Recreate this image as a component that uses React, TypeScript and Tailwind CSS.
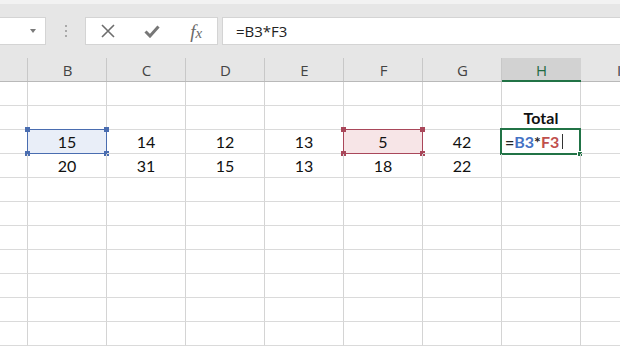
import React from "react";

const cols = ["A", "B", "C", "D", "E", "F", "G", "H", "I"];

const rows: string[][] = [
  ["", "", "", "", "", "", "", "", ""],
  ["", "", "", "", "", "", "", "Total", ""],
  ["", "15", "14", "12", "13", "5", "42", "", ""],
  ["", "20", "31", "15", "13", "18", "22", "", ""],
  ["", "", "", "", "", "", "", "", ""],
  ["", "", "", "", "", "", "", "", ""],
  ["", "", "", "", "", "", "", "", ""],
  ["", "", "", "", "", "", "", "", ""],
  ["", "", "", "", "", "", "", "", ""],
  ["", "", "", "", "", "", "", "", ""],
  ["", "", "", "", "", "", "", "", ""],
];

const cellFont = { fontFamily: "Lato, 'Liberation Sans', sans-serif" };
const uiFont = { fontFamily: "'Open Sans', 'Noto Sans', sans-serif" };

function Corners({ color }: { color: string }) {
  const base = "absolute w-[5px] h-[5px]";
  return (
    <>
      <span className={`${base} left-[-3px] top-[-3px] ${color}`} />
      <span className={`${base} right-[-3px] top-[-3px] ${color}`} />
      <span className={`${base} left-[-3px] bottom-[-3px] ${color}`} />
      <span className={`${base} right-[-3px] bottom-[-3px] ${color}`} />
    </>
  );
}

export default function App() {
  return (
    <div className="w-[620px] h-[346px] overflow-hidden bg-white relative">
      {/* top strip */}
      <div className="h-[4px] bg-[#f2f2f2]" />
      <div className="bg-[#e6e6e6] pt-[13px] pb-[13px]">
        <div className="flex items-stretch h-[28px]">
          {/* name box */}
          <div className="w-[46px] bg-white border border-l-0 border-[#d4d4d4] flex items-center justify-end pr-[9px]">
            <svg width="6" height="4" viewBox="0 0 6 4">
              <path d="M0 0 L6 0 L3 4 Z" fill="#7a7a7a" />
            </svg>
          </div>
          {/* dots */}
          <div className="w-[39px] flex flex-col items-center justify-center gap-[3px] pl-[1px]">
            <span className="w-[2px] h-[2px] bg-[#a9a9a9]" />
            <span className="w-[2px] h-[2px] bg-[#a9a9a9]" />
            <span className="w-[2px] h-[2px] bg-[#a9a9a9]" />
          </div>
          {/* buttons */}
          <div className="w-[133px] bg-white border border-[#d4d4d4] flex items-center">
            <div className="w-[44px] flex justify-center pl-[1px]">
              <svg width="14" height="14" viewBox="0 0 14 14">
                <path d="M1 1 L13 13 M13 1 L1 13" stroke="#6d6d6d" strokeWidth="1.6" />
              </svg>
            </div>
            <div className="w-[44px] flex justify-center pl-[2px]">
              <svg width="16" height="13" viewBox="0 0 16 13">
                <path d="M1.5 6.5 L6 11 L14.5 1.5" stroke="#777777" strokeWidth="3" fill="none" />
              </svg>
            </div>
            <div
              className="w-[44px] flex justify-center text-[19px] italic text-[#6a6a6a] leading-none pl-[2px]"
              style={{ fontFamily: "'Liberation Serif', serif" }}
            >
              <span>f</span>
              <span className="text-[15px] mt-[4px]">x</span>
            </div>
          </div>
          {/* formula input */}
          <div
            className="flex-1 ml-[4px] bg-white border border-r-0 border-[#d4d4d4] flex items-center pl-[13px] text-[15px] text-[#222]"
            style={uiFont}
          >
            =B3*F3
          </div>
        </div>
      </div>

      {/* grid */}
      <div className="grid grid-cols-[28px_repeat(7,79px)_1fr]">
        {cols.map((c) => {
          const active = c === "H";
          return (
            <div
              key={c}
              className={`h-[24px] flex items-center justify-center text-[15px] border-b border-[#b9b9b9] relative ${
                active ? "bg-[#d2d2d2] text-[#1f6b43]" : "bg-[#e6e6e6] text-[#444]"
              } ${c === "I" ? "justify-start pl-[36px]" : ""}`}
              style={uiFont}
            >
              {c !== "I" && c !== "H" ? (
                <span className="absolute right-0 top-0 bottom-0 w-px bg-[#c8c8c8]" />
              ) : null}
              {active ? <span className="absolute left-0 right-0 bottom-[-1px] h-[2px] bg-[#217346]" /> : null}
              <span className="mt-[1px]">{c === "A" ? "" : c}</span>
            </div>
          );
        })}
        {rows.map((r, ri) =>
          r.map((v, ci) => {
            const isB3 = ri === 2 && ci === 1;
            const isF3 = ri === 2 && ci === 5;
            const isH3 = ri === 2 && ci === 7;
            const bold = v === "Total";
            return (
              <div
                key={`${ri}-${ci}`}
                className={`h-[24px] border-b border-[#dadada] ${
                  ci < 8 ? "border-r" : ""
                } border-r-[#d4d4d4] relative flex items-center justify-center text-[16px] text-[#111] ${
                  bold ? "font-bold" : ""
                }`}
                style={cellFont}
              >
                {isB3 ? (
                  <div className="absolute left-[-1px] top-[-1px] right-[-1px] bottom-[-1px] border-[1.5px] border-[#4a6db0] bg-[#e9eef8]">
                    <Corners color="bg-[#4a6db0]" />
                  </div>
                ) : null}
                {isF3 ? (
                  <div className="absolute left-[-1px] top-[-1px] right-[-1px] bottom-[-1px] border-[1.5px] border-[#a9475a] bg-[#f7e5e7]">
                    <Corners color="bg-[#a9475a]" />
                  </div>
                ) : null}
                {isH3 ? (
                  <>
                    <div className="absolute left-[-2px] top-[-2px] right-[-1px] bottom-[-2px] border-2 border-[#217346]">
                      <span className="absolute right-[-4px] bottom-[-4px] w-[6px] h-[6px] bg-[#217346] border border-white" />
                    </div>
                    <div className="relative w-full pl-[3px] flex items-center font-bold text-[16px]">
                      <span className="text-[#222]">=</span>
                      <span className="text-[#4472c4]">B3</span>
                      <span className="text-[#222]">*</span>
                      <span className="text-[#c0504d]">F3</span>
                      <span className="ml-[3px] w-px h-[15px] bg-[#333]" />
                    </div>
                  </>
                ) : (
                  <span className="relative mt-[1px]">{v}</span>
                )}
              </div>
            );
          })
        )}
      </div>
    </div>
  );
}
